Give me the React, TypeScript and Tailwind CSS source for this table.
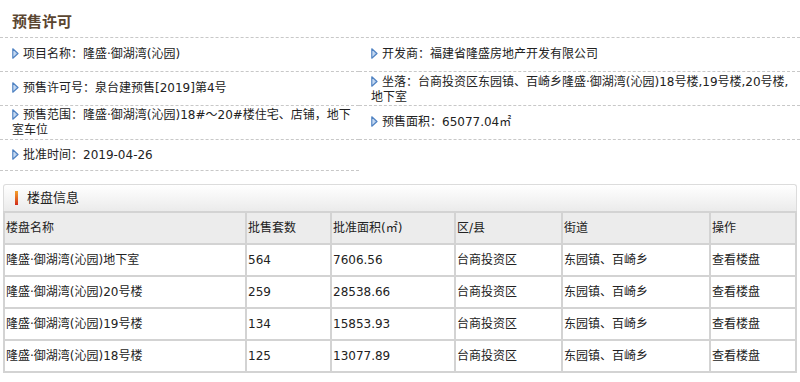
import React from "react";

const FONT = '"DejaVu Sans", "Noto Sans CJK SC", sans-serif';

function Tri() {
  return (
    <svg width="7" height="11" viewBox="0 0 7 11" className="inline-block align-[-1px] mr-[4px]">
      <defs>
        <linearGradient id="tg" x1="0" y1="0" x2="1" y2="0">
          <stop offset="0" stopColor="#dbe8f7" />
          <stop offset="1" stopColor="#9dbde6" />
        </linearGradient>
      </defs>
      <polygon points="0.8,0.8 6,5.5 0.8,10.2" fill="url(#tg)" stroke="#4f82c2" strokeWidth="1.2" strokeLinejoin="round" />
    </svg>
  );
}

function Cell({ children, border = true, className = "" }: { children?: React.ReactNode; border?: boolean; className?: string }) {
  return (
    <div
      className={
        "flex items-center pl-[12px] text-[12px] leading-[15px] text-[#222222] " +
        (border ? "border-b border-dashed border-[#c8c8c8] " : "") +
        className
      }
    >
      <div className="whitespace-nowrap">{children}</div>
    </div>
  );
}

const rows = [
  ["隆盛·御湖湾(沁园)地下室", "564", "7606.56"],
  ["隆盛·御湖湾(沁园)20号楼", "259", "28538.66"],
  ["隆盛·御湖湾(沁园)19号楼", "134", "15853.93"],
  ["隆盛·御湖湾(沁园)18号楼", "125", "13077.89"],
];

export default function App() {
  return (
    <div className="w-[800px] h-[382px] bg-white overflow-hidden" style={{ fontFamily: FONT }}>
      <div className="h-[38px] border-b border-dashed border-[#c8c8c8] pl-[12px] flex items-center pt-[6px]">
        <span className="text-[15px] font-bold text-[#5b4631]" style={{ fontFamily: '"Noto Sans CJK SC", sans-serif' }}>
          预售许可
        </span>
      </div>
      <div className="grid grid-cols-[359px_1fr] grid-rows-[34px_34px_34px_31px]">
        <Cell>
          <Tri />项目名称：隆盛·御湖湾(沁园)
        </Cell>
        <Cell>
          <Tri />开发商：福建省隆盛房地产开发有限公司
        </Cell>
        <Cell>
          <Tri />预售许可号：泉台建预售[2019]第4号
        </Cell>
        <Cell className="pt-[2px]">
          <span>
            <Tri />坐落：台商投资区东园镇、百崎乡隆盛·御湖湾(沁园)18号楼,19号楼,20号楼,
            <br />
            地下室
          </span>
        </Cell>
        <Cell>
          <span>
            <Tri />预售范围：隆盛·御湖湾(沁园)18#～20#楼住宅、店铺，地下
            <br />
            室车位
          </span>
        </Cell>
        <Cell>
          <Tri />预售面积：65077.04㎡
        </Cell>
        <Cell>
          <Tri />批准时间：2019-04-26
        </Cell>
        <div />
      </div>

      <div className="ml-[3px] w-[794px] mt-[13px]">
        <div className="h-[27px] border border-b-0 border-[#dcdcdc] rounded-t-[3px] bg-linear-to-b from-white to-[#ebebeb] flex items-center pl-[11px]">
          <span className="w-[3px] h-[14px] bg-linear-to-b from-[#f3a02a] to-[#d0241c] mr-[9px]" />
          <span className="text-[13px] text-[#222222]">楼盘信息</span>
        </div>
        <table className="w-[794px] table-fixed border-collapse text-[12px] text-[#222222]">
          <colgroup>
            <col className="w-[242px]" />
            <col className="w-[85px]" />
            <col className="w-[124px]" />
            <col className="w-[107px]" />
            <col className="w-[148px]" />
            <col />
          </colgroup>
          <thead>
            <tr className="h-[32px] bg-[#ececec]">
              {["楼盘名称", "批售套数", "批准面积(㎡)", "区/县", "街道", "操作"].map((h) => (
                <td key={h} className="border-2 border-[#d3d3d3] pl-[1px] font-normal whitespace-nowrap">
                  {h}
                </td>
              ))}
            </tr>
          </thead>
          <tbody>
            {rows.map((r) => (
              <tr key={r[0]} className="h-[32px]">
                <td className="border-2 border-[#d3d3d3] pl-[1px] whitespace-nowrap">{r[0]}</td>
                <td className="border-2 border-[#d3d3d3] pl-[1px]">{r[1]}</td>
                <td className="border-2 border-[#d3d3d3] pl-[1px]">{r[2]}</td>
                <td className="border-2 border-[#d3d3d3] pl-[1px]">台商投资区</td>
                <td className="border-2 border-[#d3d3d3] pl-[1px]">东园镇、百崎乡</td>
                <td className="border-2 border-[#d3d3d3] pl-[1px]">查看楼盘</td>
              </tr>
            ))}
          </tbody>
        </table>
      </div>
    </div>
  );
}
